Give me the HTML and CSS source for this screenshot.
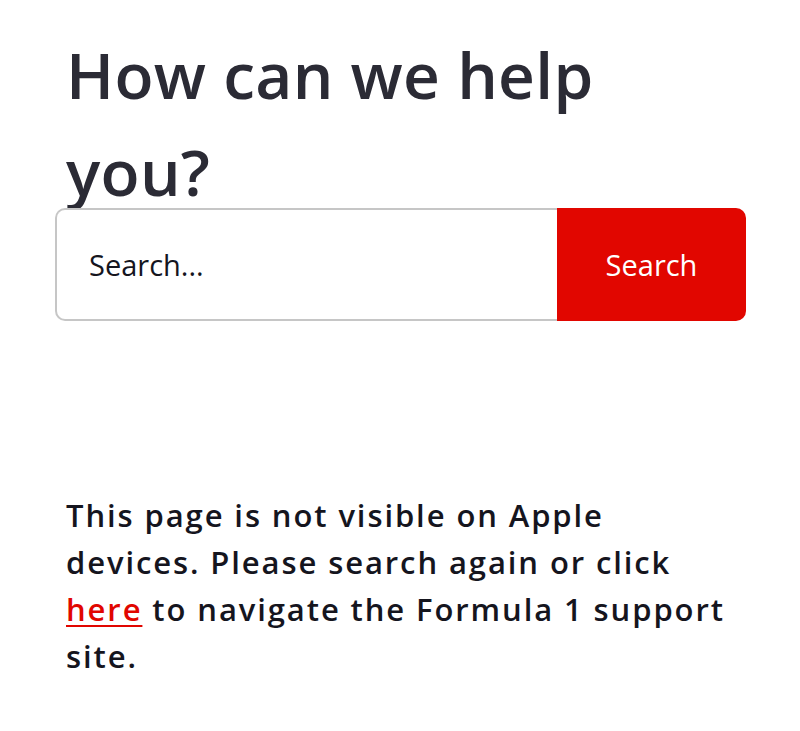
FILE: index.html
```html
<!DOCTYPE html>
<html lang="en">
<head>
<meta charset="utf-8">
<title>How can we help you?</title>
<link rel="stylesheet" href="styles.css">
</head>
<body>
<main class="page">
  <h1 class="title">How can we help you?</h1>
  <form class="search">
    <input class="search-input" type="text" placeholder="Search...">
    <button class="search-btn" type="button">Search</button>
  </form>
  <p class="notice">This page is not visible on Apple devices. Please search again or click <a href="#" class="link">here</a> to navigate the Formula 1 support site.</p>
</main>
</body>
</html>
```

FILE: styles.css
```css
html, body {
  margin: 0;
  padding: 0;
  background: #ffffff;
}
body {
  font-family: "Open Sans", "Noto Sans", sans-serif;
  color: #15151e;
}
.page {
  padding: 26px 54px 0 55px;
}
.title {
  margin: 0 0 -12px 0;
  padding: 0 11px;
  font-size: 64px;
  line-height: 97px;
  font-weight: 600;
  color: #2b2b35;
  letter-spacing: 0.3px;
}
.search {
  display: flex;
  height: 113px;
  margin: 0;
}
.search-input {
  flex: 1;
  min-width: 0;
  box-sizing: border-box;
  height: 113px;
  border: 2px solid #c6c6c6;
  border-right: none;
  border-radius: 10px 0 0 10px;
  padding: 0 0 0 32px;
  font-family: inherit;
  font-size: 29px;
  color: #15151e;
  background: #fff;
  outline: none;
}
.search-input::placeholder {
  color: #15151e;
  opacity: 1;
}
.search-btn {
  width: 189px;
  height: 113px;
  border: none;
  border-radius: 0 10px 10px 0;
  background: #e10600;
  color: #ffffff;
  font-family: inherit;
  font-size: 29px;
  padding: 0;
}
.notice {
  margin: 171px 0 0 0;
  padding: 0 2px 0 11px;
  font-size: 31px;
  line-height: 47px;
  font-weight: 600;
  letter-spacing: 1.9px;
}
.link {
  color: #e10600;
  text-decoration: underline;
  text-underline-offset: 4px;
  text-decoration-thickness: 2px;
}
```
